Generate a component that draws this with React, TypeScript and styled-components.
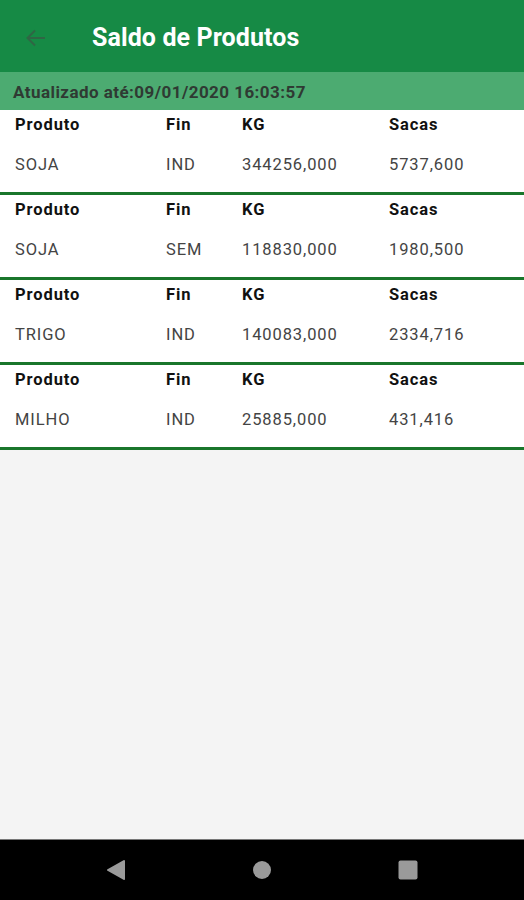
import styled, { createGlobalStyle } from 'styled-components';

const GlobalStyle = createGlobalStyle`
  html, body {
    margin: 0;
    padding: 0;
    background: #f4f4f4;
    font-family: Roboto, 'Liberation Sans', sans-serif;
  }
`;

const Screen = styled.div`
  width: 524px;
  height: 900px;
  display: flex;
  flex-direction: column;
  background: #f4f4f4;
  overflow: hidden;
`;

const AppBar = styled.header`
  height: 72px;
  flex-shrink: 0;
  background: #168a45;
  display: flex;
  align-items: center;
  padding: 3px 0 0 24px;
  box-sizing: border-box;
  gap: 44px;
`;

const BackButton = styled.div`
  width: 24px;
  height: 24px;
  display: flex;
  align-items: center;
  justify-content: center;
`;

const Title = styled.h1`
  margin: 0;
  color: #fff;
  font-size: 25px;
  font-weight: 700;
  letter-spacing: 0.1px;
`;

const Updated = styled.div`
  height: 38px;
  flex-shrink: 0;
  background: #4cab71;
  display: flex;
  align-items: center;
  padding: 2px 0 0 13px;
  box-sizing: border-box;
  color: #2f3a33;
  font-size: 17px;
  font-weight: 700;
  letter-spacing: 0.45px;
`;

const List = styled.div`
  display: flex;
  flex-direction: column;
`;

const Card = styled.div`
  height: 82px;
  background: #fff;
  border-bottom: 3px solid #19762b;
  display: grid;
  grid-template-columns: 151px 76px 147px 1fr;
  grid-template-rows: 28px 40px;
  padding: 0 0 0 15px;
  align-content: start;
`;

const Label = styled.div`
  color: #111;
  font-size: 16.5px;
  font-weight: 700;
  letter-spacing: 0.9px;
  display: flex;
  align-items: center;
`;

const Value = styled.div`
  color: #444;
  font-size: 16.5px;
  letter-spacing: 0.9px;
  display: flex;
  align-items: center;
  padding-top: 13px;
`;

const Spacer = styled.div`
  flex: 1;
`;

const NavBar = styled.nav`
  height: 60px;
  flex-shrink: 0;
  background: #000;
  border-top: 1px solid #777;
  display: flex;
  align-items: center;
  justify-content: center;
  gap: 126px;
`;

const rows = [
  { produto: 'SOJA', fin: 'IND', kg: '344256,000', sacas: '5737,600' },
  { produto: 'SOJA', fin: 'SEM', kg: '118830,000', sacas: '1980,500' },
  { produto: 'TRIGO', fin: 'IND', kg: '140083,000', sacas: '2334,716' },
  { produto: 'MILHO', fin: 'IND', kg: '25885,000', sacas: '431,416' },
];

export default function App() {
  return (
    <>
      <GlobalStyle />
      <Screen>
        <AppBar>
          <BackButton>
            <svg width="24" height="24" viewBox="0 0 24 24" fill="none" stroke="#2f6644" strokeWidth="2">
              <path d="M21 12H3.5M11 4.5L3.5 12l7.5 7.5" />
            </svg>
          </BackButton>
          <Title>Saldo de Produtos</Title>
        </AppBar>
        <Updated>Atualizado até:09/01/2020 16:03:57</Updated>
        <List>
          {rows.map((r, i) => (
            <Card key={i}>
              <Label>Produto</Label>
              <Label>Fin</Label>
              <Label>KG</Label>
              <Label>Sacas</Label>
              <Value>{r.produto}</Value>
              <Value>{r.fin}</Value>
              <Value>{r.kg}</Value>
              <Value>{r.sacas}</Value>
            </Card>
          ))}
        </List>
        <Spacer />
        <NavBar>
          <svg width="20" height="22" viewBox="0 0 20 22">
            <path d="M18 2 L2 11 L18 20 Z" fill="#9a9a9a" stroke="#9a9a9a" strokeWidth="2" strokeLinejoin="round" />
          </svg>
          <svg width="20" height="20" viewBox="0 0 20 20">
            <circle cx="10" cy="10" r="9" fill="#9a9a9a" />
          </svg>
          <svg width="20" height="20" viewBox="0 0 20 20">
            <rect x="0.5" y="0.5" width="19" height="19" rx="2" fill="#9a9a9a" />
          </svg>
        </NavBar>
      </Screen>
    </>
  );
}
